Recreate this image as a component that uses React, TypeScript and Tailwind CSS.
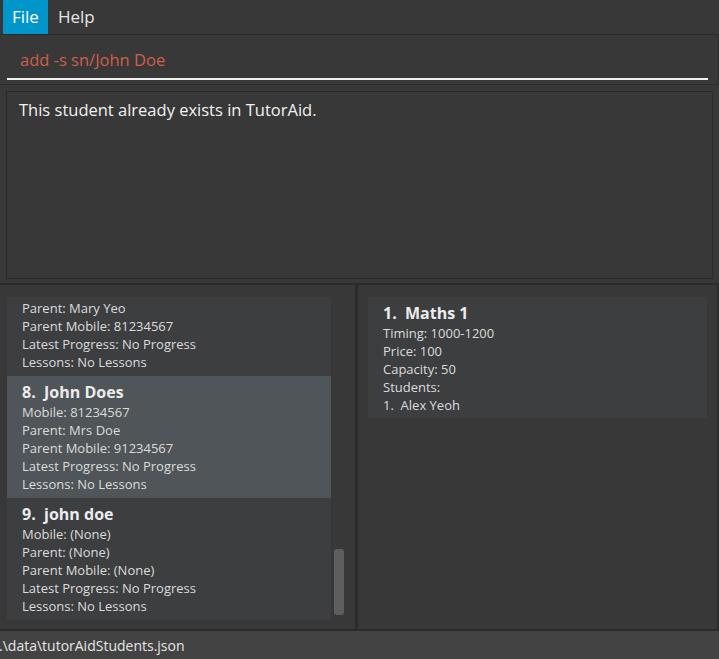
import React from "react";

type Student = {
  id: number;
  name: string;
  mobile: string;
  parent: string;
  parentMobile: string;
  progress: string;
  lessons: string;
};

const STUDENTS: Student[] = [
  { id: 7, name: "Alex Yeo", mobile: "81234567", parent: "Mary Yeo", parentMobile: "81234567", progress: "No Progress", lessons: "No Lessons" },
  { id: 8, name: "John Does", mobile: "81234567", parent: "Mrs Doe", parentMobile: "91234567", progress: "No Progress", lessons: "No Lessons" },
  { id: 9, name: "john doe", mobile: "(None)", parent: "(None)", parentMobile: "(None)", progress: "No Progress", lessons: "No Lessons" },
];

const FONT = "font-['Open_Sans',sans-serif]";

function StudentCard({ s, selected }: { s: Student; selected?: boolean }) {
  return (
    <div
      className={
        "pl-[15px] pt-[5px] pb-[5px] " + (selected ? "bg-[#4f5558]" : "bg-[#3c3e40]")
      }
    >
      <div className="h-[22px] leading-[22px] text-[16px] font-bold text-[#ececec] whitespace-pre">
        {s.id}.  {s.name}
      </div>
      <div className="text-[13px] leading-[18px] text-[#dcdcdc]">
        <div>Mobile: {s.mobile}</div>
        <div>Parent: {s.parent}</div>
        <div>Parent Mobile: {s.parentMobile}</div>
        <div>Latest Progress: {s.progress}</div>
        <div>Lessons: {s.lessons}</div>
      </div>
    </div>
  );
}

export default function App() {
  return (
    <div className={"w-[719px] h-[659px] bg-[#383838] flex flex-col overflow-hidden " + FONT}>
      {/* Menu bar */}
      <div className="h-[35px] flex items-stretch pl-[3px] border-b border-[#2b2b2b] shrink-0">
        <div className="bg-[#0096c9] px-[9px] flex items-center text-[17px] text-white">File</div>
        <div className="px-[10px] flex items-center text-[17px] text-[#e6e6e6]">Help</div>
      </div>

      {/* Command box */}
      <div className="h-[50px] shrink-0 border-r border-b border-[#2b2b2b] pl-[7px] pr-[10px] flex flex-col">
        <div className="flex-1 flex items-center pl-[13px] pt-[7px] text-[16.5px] text-[#cf5f4a]">
          add -s sn/John Doe
        </div>
        <div className="h-[2px] bg-[#f2f2f2] mb-[4px]" />
      </div>

      {/* Result display */}
      <div className="h-[200px] shrink-0 pt-[6px] px-[6px] border-b-2 border-[#2b2b2b]">
        <div className="h-[188px] border border-[#2a2a2a] pl-[12px] pt-[6px] text-[16.5px] text-[#f2f2f2]">
          This student already exists in TutorAid.
        </div>
      </div>

      {/* Lists */}
      <div className="flex-1 flex min-h-0 border-b-2 border-[#2b2b2b]">
        <div className="w-[355px] shrink-0 flex pl-[7px] pt-[12px]">
          <div className="w-[324px] h-[323px] overflow-hidden">
            <div className="-mt-[43px]">
              {STUDENTS.map((s) => (
                <StudentCard key={s.id} s={s} selected={s.id === 8} />
              ))}
            </div>
          </div>
          <div className="ml-[3px] w-[10px] h-[66px] mt-[252px] rounded-[3px] bg-[#5e5e5e]" />
        </div>
        <div className="w-[3px] bg-[#2b2b2b] shrink-0" />
        <div className="flex-1 pl-[10px] pr-[10px] pt-[12px] border-r-2 border-[#2b2b2b]">
          <div className="bg-[#3c3e40] pl-[15px] pt-[5px] pb-[4px]">
            <div className="h-[22px] leading-[22px] text-[16px] font-bold text-[#ececec] whitespace-pre">
              1.  Maths 1
            </div>
            <div className="text-[13px] leading-[18px] text-[#dcdcdc]">
              <div>Timing: 1000-1200</div>
              <div>Price: 100</div>
              <div>Capacity: 50</div>
              <div>Students:</div>
              <div className="whitespace-pre">1.  Alex Yeoh</div>
            </div>
          </div>
        </div>
      </div>

      {/* Status bar */}
      <div className="h-[28px] shrink-0 bg-[#434343] flex items-center pt-[1px] text-[14px] text-[#e6e6e6] -ml-[1px]">
        .\data\tutorAidStudents.json
      </div>
    </div>
  );
}
